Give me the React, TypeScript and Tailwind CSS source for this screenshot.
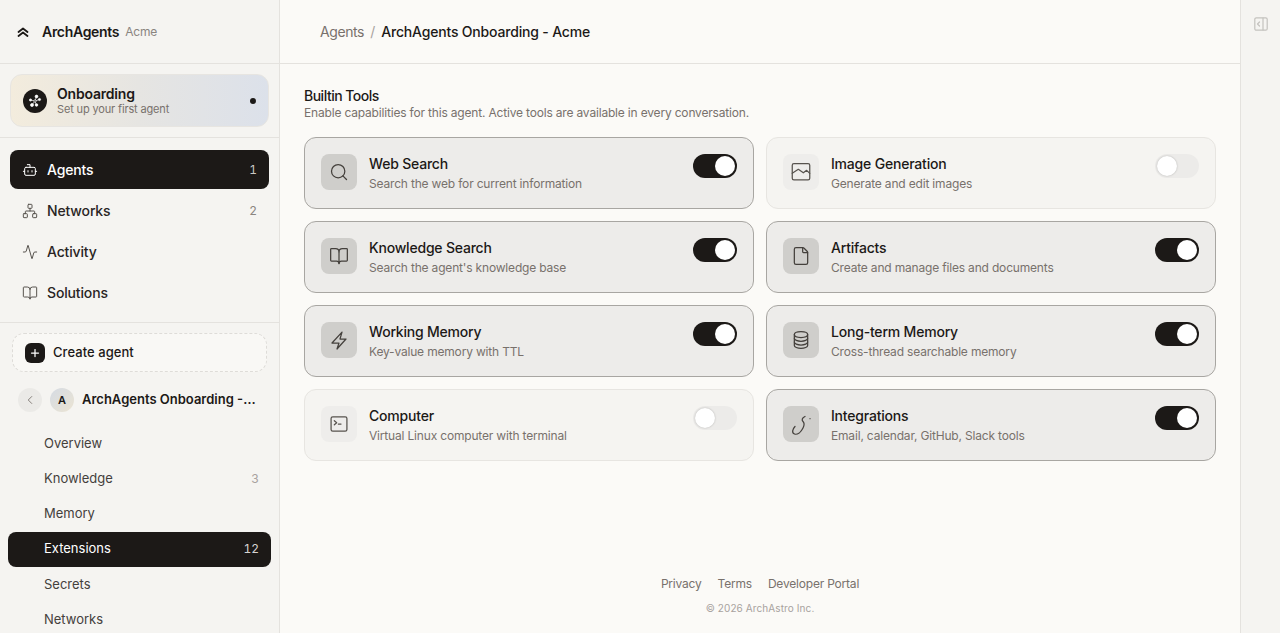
import { Activity, Bot, BookOpen, ChevronLeft, File, Network, Plus, Search } from 'lucide-react';
import type { ReactNode } from 'react';

const ImageIcon = () => (
  <svg width="20" height="20" viewBox="0 0 24 24" fill="none" stroke="currentColor" strokeWidth="1.5" strokeLinecap="round" strokeLinejoin="round">
    <rect x="1.500" y="2" width="21" height="19.500" rx="2" />
    <path d="M1.500 13.600L8.800 8.800l6 4.200 4-3 3.700 3.600" />
  </svg>
);

const TerminalIcon = () => (
  <svg width="20" height="20" viewBox="0 0 24 24" fill="none" stroke="currentColor" strokeWidth="1.500" strokeLinecap="round" strokeLinejoin="round">
    <rect x="2.500" y="3.500" width="19" height="17" rx="2" />
    <path d="M6.400 8l2.800 2.500L6.400 13M11.200 12h3.200" />
  </svg>
);

const BoltIcon = () => (
  <svg width="20" height="20" viewBox="0 0 24 24" fill="none" stroke="currentColor" strokeWidth="1.500" strokeLinecap="round" strokeLinejoin="round">
    <path d="M15.600 2.500L3.600 15.600H12l-2.400 7.200 10.800-12h-7.200z" />
  </svg>
);

const DatabaseIcon = () => (
  <svg width="20" height="20" viewBox="0 0 24 24" fill="none" stroke="currentColor" strokeWidth="1.500" strokeLinecap="round" strokeLinejoin="round">
    <ellipse cx="12" cy="5.500" rx="8" ry="3.500" />
    <path d="M4 5.500v13c0 1.900 3.600 3.500 8 3.500s8-1.600 8-3.500v-13" />
    <path d="M4 10c0 1.900 3.600 3.500 8 3.500s8-1.600 8-3.500" />
    <path d="M4 14.500c0 1.900 3.600 3.500 8 3.500s8-1.600 8-3.500" />
  </svg>
);

const HookIcon = () => (
  <svg width="36" height="36" viewBox="0 0 36 36" fill="none" stroke="currentColor" strokeWidth="1.250" strokeLinecap="round" strokeLinejoin="round">
    <path d="M22 10.500c-3 1.500-3.500 3.500-2 5 2 2 1.500 3.500 0 6.500-2 4-5.500 7-8.500 6-3-1-2-5 .5-7.500" />
    <path d="M27 12.700h.01" />
  </svg>
);

const Logo = () => (
  <svg width="12" height="12" viewBox="0 0 12 12" fill="none" stroke="#1c1917" strokeWidth="1.800" strokeLinecap="round" strokeLinejoin="round">
    <path d="M1.500 6L6 2.500 10.500 6" />
    <path d="M1.500 10L6 6.500l4.500 3.500" />
  </svg>
);

const Sparkle = () => (
  <svg width="14" height="14" viewBox="0 0 14 14" fill="#fff" stroke="#fff" strokeWidth="0.700">
    <path d="M7 7L8.500 2.500M7 7l4.500-1.500M7 7l1.500 4.500M7 7l-4.500-1M7 7l-3 4" />
    <circle cx="8.500" cy="2.500" r="1.400" />
    <circle cx="11.500" cy="5.500" r="1.100" />
    <circle cx="8.500" cy="11" r="1.300" />
    <circle cx="2.500" cy="6" r="1.100" />
    <circle cx="4" cy="11" r="1.500" />
    <circle cx="7" cy="7" r="1.200" fill="#1c1917" />
  </svg>
);

type NavItem = { label: string; icon: ReactNode; count?: string; active?: boolean };

const mainNav: NavItem[] = [
  { label: 'Agents', icon: <Bot size={16} strokeWidth={1.5} />, count: '1', active: true },
  { label: 'Networks', icon: <Network size={16} strokeWidth={1.5} />, count: '2' },
  { label: 'Activity', icon: <Activity size={16} strokeWidth={1.5} /> },
  { label: 'Solutions', icon: <BookOpen size={16} strokeWidth={1.5} /> },
];

const subNav: NavItem[] = [
  { label: 'Overview', icon: null },
  { label: 'Knowledge', icon: null, count: '3' },
  { label: 'Memory', icon: null },
  { label: 'Extensions', icon: null, count: '12', active: true },
  { label: 'Secrets', icon: null },
  { label: 'Networks', icon: null },
];

type Tool = { name: string; description: string; icon: ReactNode; on: boolean };

const tools: Tool[] = [
  { name: 'Web Search', description: 'Search the web for current information', icon: <Search size={20} strokeWidth={1.5} />, on: true },
  { name: 'Image Generation', description: 'Generate and edit images', icon: <ImageIcon />, on: false },
  { name: 'Knowledge Search', description: "Search the agent's knowledge base", icon: <BookOpen size={20} strokeWidth={1.5} />, on: true },
  { name: 'Artifacts', description: 'Create and manage files and documents', icon: <File size={20} strokeWidth={1.5} />, on: true },
  { name: 'Working Memory', description: 'Key-value memory with TTL', icon: <BoltIcon />, on: true },
  { name: 'Long-term Memory', description: 'Cross-thread searchable memory', icon: <DatabaseIcon />, on: true },
  { name: 'Computer', description: 'Virtual Linux computer with terminal', icon: <TerminalIcon />, on: false },
  { name: 'Integrations', description: 'Email, calendar, GitHub, Slack tools', icon: <HookIcon />, on: true },
];

function Toggle({ on }: { on: boolean }) {
  return (
    <div className={on ? 'flex h-6 w-11 items-center justify-end rounded-full bg-[#1c1917] px-0.5' : 'flex h-6 w-11 items-center justify-start rounded-full bg-[#ecebe9] px-0.5'}>
      <div className={on ? 'size-5 rounded-full bg-white' : 'size-5 rounded-full bg-white shadow-[0_0_2px_rgba(0,0,0,0.25)]'} />
    </div>
  );
}

function ToolCard({ tool }: { tool: Tool }) {
  return (
    <div className={tool.on
      ? 'flex h-[72px] items-start rounded-xl border border-[#a8a6a2] bg-[#edecea] px-4 pt-4'
      : 'flex h-[72px] items-start rounded-xl border border-[#e7e5e1] bg-[#f5f4f1] px-4 pt-4'}>
      <div className={tool.on
        ? 'flex size-9 shrink-0 items-center justify-center rounded-lg bg-[#cfcecb] text-[#44403c]'
        : 'flex size-9 shrink-0 items-center justify-center rounded-lg bg-[#eeedeb] text-[#57534e]'}>
        {tool.icon}
      </div>
      <div className="ml-3 flex-1">
        <div className="text-[14px] leading-5 font-medium tracking-[-0.2px] text-[#1c1917]">{tool.name}</div>
        <div className="mt-0.5 text-[12px] leading-4 tracking-[-0.18px] text-[#78716c]">{tool.description}</div>
      </div>
      <Toggle on={tool.on} />
    </div>
  );
}

export default function App() {
  return (
    <div className="flex h-[633px] overflow-hidden bg-[#fbfaf7] font-['Inter',sans-serif] text-[#1c1917]">
      <aside className="flex w-[280px] shrink-0 flex-col overflow-hidden border-r border-[#e4e2de] bg-[#f5f4f1]">
        <div className="flex h-16 shrink-0 items-center border-b border-[#e4e2de] pl-[17px]">
          <Logo />
          <span className="ml-[13px] text-[14px] font-semibold tracking-[-0.3px]">ArchAgents</span>
          <span className="ml-1.5 text-[12px] tracking-[-0.18px] text-[#8a8580]">Acme</span>
        </div>
        <div className="shrink-0 border-b border-[#e4e2de] px-2.5 py-2.5">
          <div className="flex h-[53px] items-center rounded-xl border border-[#e7e5e1] bg-gradient-to-r from-[#f3ecdd] via-[#e6e5e2] to-[#dce1ea] pr-3 pl-3">
            <div className="flex size-6 items-center justify-center rounded-full bg-[#1c1917]">
              <Sparkle />
            </div>
            <div className="ml-2.5 flex-1">
              <div className="text-[14px] leading-[17px] font-semibold tracking-[-0.2px]">Onboarding</div>
              <div className="text-[11px] leading-[14px] tracking-[-0.15px] text-[#78716c]">Set up your first agent</div>
            </div>
            <div className="size-1.5 rounded-full bg-[#1c1917]" />
          </div>
        </div>
        <nav className="flex shrink-0 flex-col gap-0.5 border-b border-[#e4e2de] px-2.5 pt-3 pb-2.5">
          {mainNav.map((item) => (
            <div
              key={item.label}
              className={item.active
                ? 'flex h-[39px] items-center rounded-lg bg-[#1c1917] pr-3 pl-3 text-white'
                : 'flex h-[39px] items-center rounded-lg pr-3 pl-3 text-[#292524]'}
            >
              <span className={item.active ? 'text-white' : 'text-[#57534e]'}>{item.icon}</span>
              <span className="ml-[9px] flex-1 text-[14px] font-medium tracking-[-0.15px]">{item.label}</span>
              {item.count && <span className={item.active ? 'text-[12px] text-[#c9c7c4] tabular-nums' : 'text-[12px] text-[#8a8580] tabular-nums'}>{item.count}</span>}
            </div>
          ))}
        </nav>
        <div className="flex flex-col px-2 pt-2.5">
          <div className="mx-1 flex h-[39px] shrink-0 items-center rounded-xl border border-dashed border-[#dedcd8] bg-[#f9f8f5] px-3">
            <div className="flex size-5 items-center justify-center rounded-md bg-[#1c1917] text-white">
              <Plus size={12} strokeWidth={2.5} />
            </div>
            <span className="ml-2 text-[13px] font-medium tracking-[0.05px]">Create agent</span>
          </div>
          <div className="mt-4 flex h-6 shrink-0 items-center pr-[14px] pl-2.5">
            <div className="flex size-6 shrink-0 items-center justify-center rounded-full bg-[#ebeae7] text-[#78716c]">
              <ChevronLeft size={14} strokeWidth={1.5} />
            </div>
            <div className="ml-2 flex size-6 shrink-0 items-center justify-center rounded-full bg-gradient-to-br from-[#d5dbe3] to-[#ebe4d3] text-[11px] font-semibold">A</div>
            <span className="ml-2 truncate text-[13px] font-semibold">ArchAgents Onboarding - Acme</span>
          </div>
          <div className="mt-[14px] flex flex-col gap-[0.2px]">
            {subNav.map((item) => (
              <div
                key={item.label}
                className={item.active
                  ? 'flex h-[35px] shrink-0 items-center rounded-lg bg-[#1c1917] pr-3 pl-9 text-white'
                  : 'flex h-[35px] shrink-0 items-center rounded-lg pr-3 pl-9 text-[#44403c]'}
              >
                <span className="flex-1 text-[13px]">{item.label}</span>
                {item.count && <span className={item.active ? 'text-[12px] text-[#d6d3d1] tabular-nums' : 'text-[12px] text-[#a8a29e] tabular-nums'}>{item.count}</span>}
              </div>
            ))}
          </div>
        </div>
      </aside>

      <main className="flex min-w-0 flex-1 flex-col">
        <header className="flex h-16 shrink-0 items-center border-b border-[#e4e2de] pl-10">
          <span className="text-[14px] tracking-[-0.4px] text-[#78716c]">Agents</span>
          <span className="mx-1.5 text-[14px] text-[#a8a29e]">/</span>
          <span className="text-[14px] font-medium tracking-[-0.18px]">ArchAgents Onboarding - Acme</span>
        </header>
        <section className="flex flex-1 flex-col px-6 pt-[23px]">
          <h2 className="text-[14px] leading-[17px] font-medium tracking-[-0.5px]">Builtin Tools</h2>
          <p className="mt-px text-[12px] leading-4 tracking-[-0.18px] text-[#78716c]">Enable capabilities for this agent. Active tools are available in every conversation.</p>
          <div className="mt-4 grid grid-cols-2 gap-3">
            {tools.map((tool) => (
              <ToolCard key={tool.name} tool={tool} />
            ))}
          </div>
          <footer className="mt-auto flex flex-col items-center pb-[17px]">
            <div className="flex gap-4 text-[12px] leading-4 tracking-[-0.2px] text-[#78716c]">
              <span>Privacy</span>
              <span>Terms</span>
              <span>Developer Portal</span>
            </div>
            <div className="mt-2 text-[10px] leading-4 tracking-[0.1px] text-[#a8a29e]">© 2026 ArchAstro Inc.</div>
          </footer>
        </section>
      </main>

      <aside className="flex w-10 shrink-0 justify-center border-l border-[#e4e2de] bg-[#f5f4f1] pt-[17px]">
        <svg width="14" height="14" viewBox="0 0 14 14" fill="none" stroke="#c4c2be" strokeWidth="1.200" strokeLinecap="round" strokeLinejoin="round">
          <rect x="0.800" y="0.800" width="12.400" height="12.400" rx="1.500" />
          <path d="M9 1v12M5.500 5L3.500 7l2 2" />
        </svg>
      </aside>
    </div>
  );
}
